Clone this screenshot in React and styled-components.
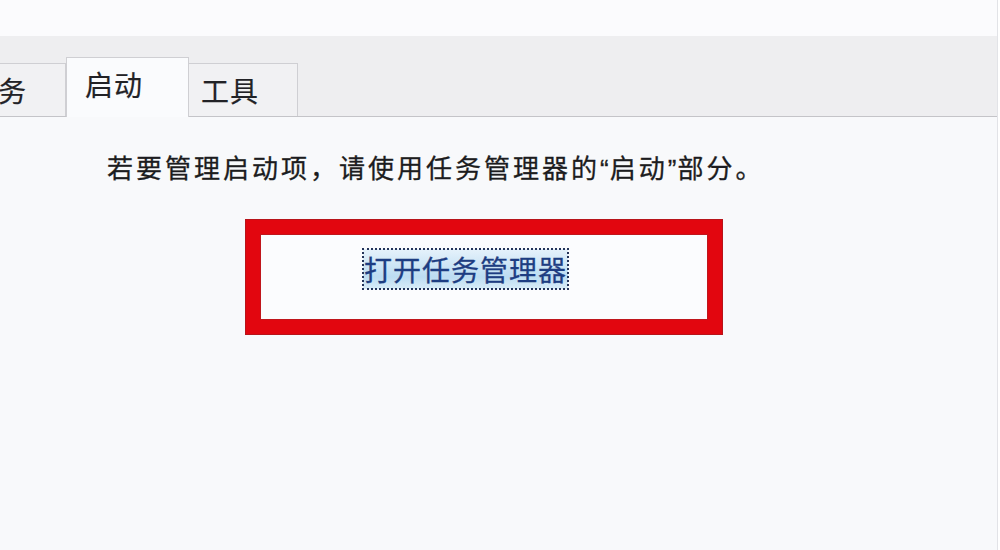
import React from 'react';
import styled, { createGlobalStyle } from 'styled-components';

const GlobalStyle = createGlobalStyle`
  html, body {
    margin: 0;
    padding: 0;
    background: #ffffff;
  }
  body {
    font-family: "Noto Sans CJK SC", "Noto Sans", sans-serif;
  }
`;

const Window = styled.div`
  width: 998px;
  height: 550px;
  box-sizing: border-box;
  border-right: 1px solid #e2e3e7;
  background: #f8f9fb;
  display: flex;
  flex-direction: column;
  overflow: hidden;
`;

const TopStrip = styled.div`
  height: 36px;
  background: #fbfbfd;
  flex-shrink: 0;
`;

const TabBar = styled.div`
  height: 81px;
  box-sizing: border-box;
  background: #eeeef0;
  border-bottom: 1px solid #c4c4c8;
  display: flex;
  align-items: flex-end;
  flex-shrink: 0;
`;

const Tab = styled.div`
  box-sizing: border-box;
  height: ${p => (p.$active ? '60px' : '53px')};
  margin-bottom: ${p => (p.$active ? '-1px' : '0')};
  margin-left: ${p => (p.$first ? '-43px' : '0')};
  padding: ${p => (p.$active ? '0 45px 0 18px' : '0 38px 0 12px')};
  padding-bottom: ${p => (p.$active ? '8px' : '0')};
  border: 1px solid #cfcfd3;
  border-bottom: none;
  border-left-width: ${p => (p.$active ? '1px' : '0')};
  background: ${p => (p.$active ? '#fafbfd' : '#f1f1f3')};
  display: flex;
  align-items: center;
  font-size: 28px;
  color: #222226;
  letter-spacing: 1px;
  -webkit-text-stroke: 0.2px #222226;
`;

const Body = styled.div`
  flex: 1;
  display: flex;
  flex-direction: column;
  padding: 33px 0 0 107px;
`;

const Message = styled.p`
  margin: 0;
  font-size: 26px;
  line-height: 34px;
  color: #1c1c20;
  letter-spacing: 3px;
  -webkit-text-stroke: 0.3px #1c1c20;
`;

const Quote = styled.span`
  font-family: "Liberation Sans", "Noto Sans", sans-serif;
  letter-spacing: 1px;
`;

const Highlight = styled.div`
  margin: 34px 0 0 139px;
  width: 476px;
  height: 114px;
  box-sizing: border-box;
  border: 14px solid #e2060f;
  box-shadow: 0 0 0 1px #b8141a, inset 0 0 0 1px #c0161c;
  background: #fbfcfe;
  padding: 15px 0 0 103px;
`;

const TaskLink = styled.a`
  display: inline-block;
  font-size: 28px;
  line-height: 40px;
  padding: 0 1px;
  color: #1d3d82;
  text-decoration: none;
  outline: 2px dotted #24345a;
  outline-offset: -1px;
  background: linear-gradient(180deg, #e6f2fb 0%, #bcdcf2 70%, #d9ecf8 100%);
  letter-spacing: 1px;
  -webkit-text-stroke: 0.3px #1d3d82;
  cursor: pointer;
`;

const App = () => {
  return (
    <>
      <GlobalStyle />
      <Window>
        <TopStrip />
        <TabBar>
          <Tab $first>服务</Tab>
          <Tab $active>启动</Tab>
          <Tab>工具</Tab>
        </TabBar>
        <Body>
          <Message>
            若要管理启动项，请使用任务管理器的<Quote>“</Quote>启动<Quote>”</Quote>部分。
          </Message>
          <Highlight>
            <TaskLink>打开任务管理器</TaskLink>
          </Highlight>
        </Body>
      </Window>
    </>
  );
};

export default App;
